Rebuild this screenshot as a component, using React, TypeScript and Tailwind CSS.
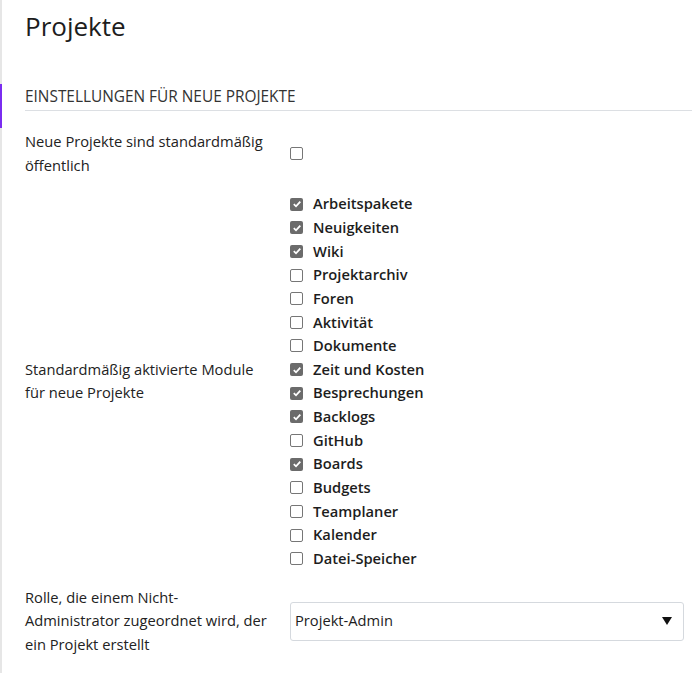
import React from "react";

const modules: [string, boolean][] = [
  ["Arbeitspakete", true],
  ["Neuigkeiten", true],
  ["Wiki", true],
  ["Projektarchiv", false],
  ["Foren", false],
  ["Aktivität", false],
  ["Dokumente", false],
  ["Zeit und Kosten", true],
  ["Besprechungen", true],
  ["Backlogs", true],
  ["GitHub", false],
  ["Boards", true],
  ["Budgets", false],
  ["Teamplaner", false],
  ["Kalender", false],
  ["Datei-Speicher", false],
];

function Box({ checked }: { checked: boolean }) {
  if (checked) {
    return (
      <span className="inline-flex h-[13px] w-[13px] shrink-0 items-center justify-center rounded-[2px] bg-[#6b6b6b]">
        <svg width="10" height="10" viewBox="0 0 10 10">
          <path d="M1.8 5.2 L4 7.3 L8.3 2.6" fill="none" stroke="#fff" strokeWidth="1.8" />
        </svg>
      </span>
    );
  }
  return <span className="inline-block h-[13px] w-[13px] shrink-0 rounded-[2px] border border-[#767676] bg-white" />;
}

export default function App() {
  return (
    <div
      className="relative min-h-[673px] w-[692px] border-l-2 border-[#e6e6e6] bg-white text-[#222]"
      style={{ fontFamily: '"Open Sans", "Noto Sans", sans-serif' }}
    >
      <div className="absolute left-[-2px] top-[84px] h-[44px] w-[2px] bg-[#7a2cf0]" />
      <div className="pl-[23px]">
        <h1 className="pt-[9px] text-[26px] font-medium leading-[34px] text-[#1d1d1d]">Projekte</h1>
        <div className="mt-[43px] border-b border-[#dcdfe3] pb-[2px] text-[15.4px] font-medium uppercase leading-[22px] text-[#333]">
          Einstellungen für neue Projekte
        </div>
        <div className="pr-[8px] text-[14.7px] leading-[23.65px]">
          <div className="mt-[19px] grid grid-cols-[265px_1fr] items-center">
            <div>
              Neue Projekte sind standardmäßig
              <br />
              öffentlich
            </div>
            <div className="flex items-center">
              <Box checked={false} />
            </div>
          </div>
          <div className="mt-[15px] grid grid-cols-[265px_1fr] items-center">
            <div>
              Standardmäßig aktivierte Module
              <br />
              für neue Projekte
            </div>
            <div className="flex flex-col">
              {modules.map(([name, c]) => (
                <div key={name} className="flex h-[23.65px] items-center gap-[10px]">
                  <Box checked={c} />
                  <span className="font-semibold text-[#1d1d1d]">{name}</span>
                </div>
              ))}
            </div>
          </div>
          <div className="mt-[15px] grid grid-cols-[265px_1fr] items-center">
            <div>
              Rolle, die einem Nicht-
              <br />
              Administrator zugeordnet wird, der
              <br />
              ein Projekt erstellt
            </div>
            <div className="flex h-[39px] items-center justify-between rounded-[3px] border border-[#d5d9de] bg-white pl-[4px] pr-[11px]">
              <span className="text-[#1d1d1d]">Projekt-Admin</span>
              <svg width="10" height="8" viewBox="0 0 10 8">
                <path d="M0 0 H10 L5 8 Z" fill="#111" />
              </svg>
            </div>
          </div>
        </div>
      </div>
    </div>
  );
}
